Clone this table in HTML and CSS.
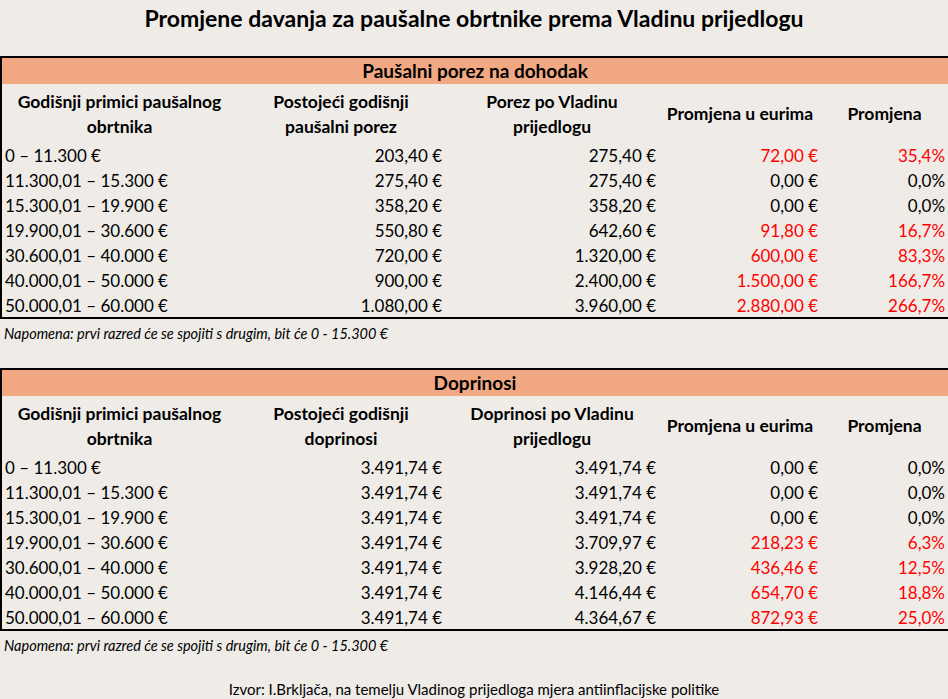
FILE: index.html
```html
<!DOCTYPE html>
<html lang="hr">
<head>
<meta charset="utf-8">
<title>Promjene davanja za paušalne obrtnike</title>
<link rel="stylesheet" href="styles.css">
</head>
<body>
<header class="title-bar"><h1 class="title">Promjene davanja za paušalne obrtnike prema Vladinu prijedlogu</h1></header>

<section class="block">
<table class="sheet">
<colgroup><col class="c1"><col class="c2"><col class="c3"><col class="c4"><col class="c5"></colgroup>
<thead>
<tr class="band"><th colspan="5">Paušalni porez na dohodak</th></tr>
<tr class="head"><th>Godišnji primici paušalnog<br>obrtnika</th><th>Postojeći godišnji<br>paušalni porez</th><th>Porez po Vladinu<br>prijedlogu</th><th>Promjena u eurima</th><th>Promjena</th></tr>
</thead>
<tbody>
<tr><td class="range">0 – 11.300 €</td><td class="num">203,40 €</td><td class="num">275,40 €</td><td class="num red">72,00 €</td><td class="num red">35,4%</td></tr>
<tr><td class="range">11.300,01 – 15.300 €</td><td class="num">275,40 €</td><td class="num">275,40 €</td><td class="num">0,00 €</td><td class="num">0,0%</td></tr>
<tr><td class="range">15.300,01 – 19.900 €</td><td class="num">358,20 €</td><td class="num">358,20 €</td><td class="num">0,00 €</td><td class="num">0,0%</td></tr>
<tr><td class="range">19.900,01 – 30.600 €</td><td class="num">550,80 €</td><td class="num">642,60 €</td><td class="num red">91,80 €</td><td class="num red">16,7%</td></tr>
<tr><td class="range">30.600,01 – 40.000 €</td><td class="num">720,00 €</td><td class="num">1.320,00 €</td><td class="num red">600,00 €</td><td class="num red">83,3%</td></tr>
<tr><td class="range">40.000,01 – 50.000 €</td><td class="num">900,00 €</td><td class="num">2.400,00 €</td><td class="num red">1.500,00 €</td><td class="num red">166,7%</td></tr>
<tr><td class="range">50.000,01 – 60.000 €</td><td class="num">1.080,00 €</td><td class="num">3.960,00 €</td><td class="num red">2.880,00 €</td><td class="num red">266,7%</td></tr>
</tbody>
</table>
<p class="note">Napomena: prvi razred će se spojiti s drugim, bit će 0 - 15.300 €</p>
</section>

<section class="block second">
<table class="sheet">
<colgroup><col class="c1"><col class="c2"><col class="c3"><col class="c4"><col class="c5"></colgroup>
<thead>
<tr class="band"><th colspan="5">Doprinosi</th></tr>
<tr class="head"><th>Godišnji primici paušalnog<br>obrtnika</th><th>Postojeći godišnji<br>doprinosi</th><th>Doprinosi po Vladinu<br>prijedlogu</th><th>Promjena u eurima</th><th>Promjena</th></tr>
</thead>
<tbody>
<tr><td class="range">0 – 11.300 €</td><td class="num">3.491,74 €</td><td class="num">3.491,74 €</td><td class="num">0,00 €</td><td class="num">0,0%</td></tr>
<tr><td class="range">11.300,01 – 15.300 €</td><td class="num">3.491,74 €</td><td class="num">3.491,74 €</td><td class="num">0,00 €</td><td class="num">0,0%</td></tr>
<tr><td class="range">15.300,01 – 19.900 €</td><td class="num">3.491,74 €</td><td class="num">3.491,74 €</td><td class="num">0,00 €</td><td class="num">0,0%</td></tr>
<tr><td class="range">19.900,01 – 30.600 €</td><td class="num">3.491,74 €</td><td class="num">3.709,97 €</td><td class="num red">218,23 €</td><td class="num red">6,3%</td></tr>
<tr><td class="range">30.600,01 – 40.000 €</td><td class="num">3.491,74 €</td><td class="num">3.928,20 €</td><td class="num red">436,46 €</td><td class="num red">12,5%</td></tr>
<tr><td class="range">40.000,01 – 50.000 €</td><td class="num">3.491,74 €</td><td class="num">4.146,44 €</td><td class="num red">654,70 €</td><td class="num red">18,8%</td></tr>
<tr><td class="range">50.000,01 – 60.000 €</td><td class="num">3.491,74 €</td><td class="num">4.364,67 €</td><td class="num red">872,93 €</td><td class="num red">25,0%</td></tr>
</tbody>
</table>
<p class="note">Napomena: prvi razred će se spojiti s drugim, bit će 0 - 15.300 €</p>
</section>

<p class="source">Izvor: I.Brkljača, na temelju Vladinog prijedloga mjera antiinflacijske politike</p>
</body>
</html>
```
FILE: styles.css
```css
html, body {
  margin: 0;
  padding: 0;
  background: #efece8;
}
body {
  width: 948px;
  height: 699px;
  overflow: hidden;
  font-family: Lato, "Open Sans", sans-serif;
  color: #000;
}
.title-bar {
  height: 56px;
  display: flex;
  justify-content: center;
  align-items: flex-start;
}
.title {
  margin: 0;
  padding-top: 4px;
  font-size: 23px;
  line-height: 28px;
  font-weight: 700;
}
.block {
  height: 312px;
}
.block.second {
  height: auto;
}
.sheet {
  width: 948px;
  border-collapse: collapse;
  table-layout: fixed;
  border: 2px solid #000;
  font-size: 17px;
}
.c1 { width: 236px; }
.c2 { width: 208px; }
.c3 { width: 214px; }
.c4 { width: 162px; }
.c5 { width: 128px; }
.band th {
  background: #f2a983;
  height: 26px;
  padding: 0;
  font-size: 19px;
  line-height: 26px;
  font-weight: 700;
  text-align: center;
}
.head th {
  height: 57px;
  padding: 1px 0 0;
  font-size: 17.5px;
  font-weight: 700;
  line-height: 25px;
  text-align: center;
  vertical-align: middle;
}
.sheet td {
  height: 23px;
  padding: 2px 3px 0;
  line-height: 23px;
  white-space: nowrap;
}
.range { text-align: left; }
.num { text-align: right; }
.red { color: #ff0000; }
.note {
  margin: 0;
  height: 30px;
  padding-left: 4px;
  font-size: 14.5px;
  line-height: 30px;
  font-style: italic;
}
.source {
  margin: 0;
  margin-top: 18px;
  text-align: center;
  font-size: 15px;
  line-height: 20px;
}
```
